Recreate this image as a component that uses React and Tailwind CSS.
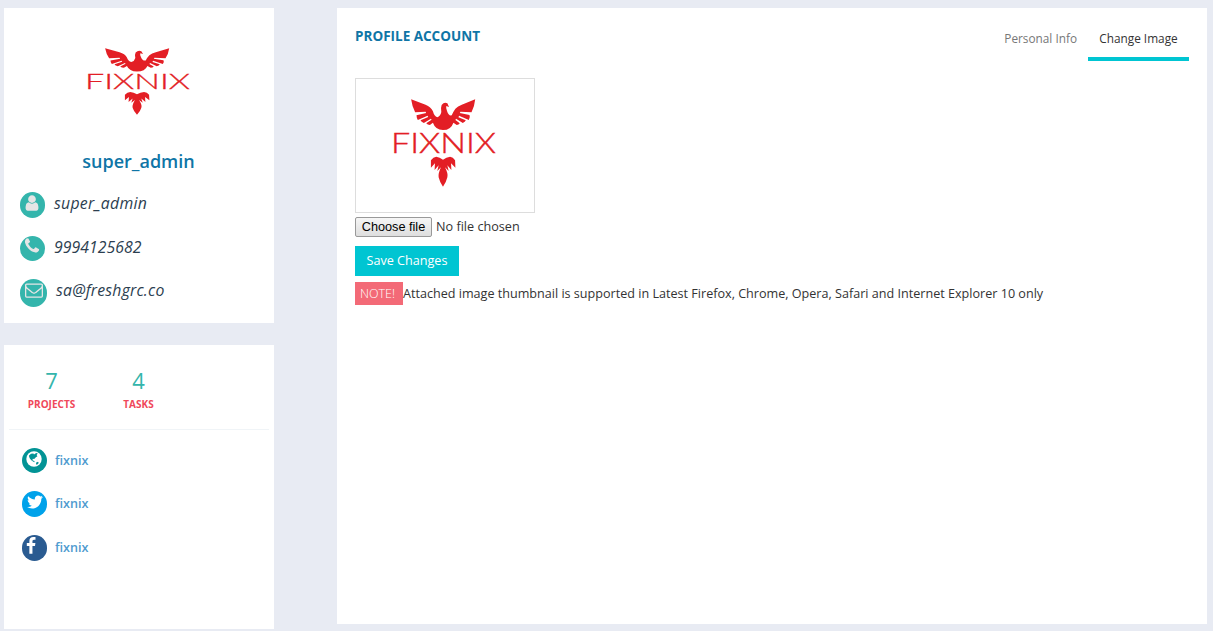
const FA = {
  user: "M1536 1399q0 109-62.5 187t-150.5 78h-854q-88 0-150.5-78t-62.5-187q0-85 8.5-160.5t31.5-152 58.5-131 94-89 134.5-34.5q131 128 313 128t313-128q76 0 134.5 34.5t94 89 58.5 131 31.5 152 8.5 160.5zm-256-887q0 159-112.5 271.5t-271.5 112.5-271.5-112.5-112.5-271.5 112.5-271.5 271.5-112.5 271.5 112.5 112.5 271.5z",
  phone: "M1600 1240q0 27-10 70.5t-21 68.5q-21 50-122 106-94 51-186 51-27 0-52.5-3.5t-57.5-12.5-47.5-14.5-55.5-20.5-49-18q-98-35-175-83-128-79-264.5-215.5t-215.5-264.5q-48-77-83-175-3-9-18-49t-20.5-55.5-14.5-47.5-12.5-57.5-3.5-52.5q0-92 51-186 56-101 106-122 25-11 68.5-21t70.5-10q14 0 21 3 18 6 53 76 11 19 30 54t35 63.5 31 53.5q3 4 17.5 25t21.5 35.5 7 28.5q0 20-28.5 50t-62 55-62 53-28.5 46q0 9 5 22.5t8.5 20.5 14 24 11.5 19q76 137 174 235t235 174q2 1 19 11.5t24 14 20.5 8.5 22.5 5q18 0 46-28.5t53-62 55-62 50-28.5q14 0 28.5 7t35.5 21.5 25 17.5q25 15 53.5 31t63.5 35 54 30q70 35 76 53 3 7 3 21z",
  envelope: "M1664 1504v-768q-32 36-69 66-268 206-426 338-51 43-83 67t-86.5 48.5-102.5 24.5h-2q-48 0-102.5-24.5t-86.5-48.5-83-67q-158-132-426-338-37-30-69-66v768q0 13 9.5 22.5t22.5 9.5h1472q13 0 22.5-9.5t9.5-22.5zm0-1051v-24.5l-.5-13-3-12.5-5.5-9-9-7.5-14-2.5h-1472q-13 0-22.5 9.5t-9.5 22.5q0 168 147 284 193 152 401 317 6 5 35 29.5t46 37.5 44.5 31.5 50.5 27.5 43 9h2q20 0 43-9t50.5-27.5 44.5-31.5 46-37.5 35-29.5q208-165 401-317 54-43 100.5-115.5t46.5-131.5zm128-37v1088q0 66-47 113t-113 47h-1472q-66 0-113-47t-47-113v-1088q0-66 47-113t113-47h1472q66 0 113 47t47 113z",
  twitter: "M1684 408q-67 98-162 167 1 14 1 42 0 130-38 259.5t-115.5 248.5-184.5 210.5-258 146-323 54.5q-271 0-496-145 35 4 78 4 225 0 401-138-105-2-188-64.5t-114-159.5q33 5 61 5 43 0 85-11-112-23-185.5-111.5t-73.5-205.5v-4q68 38 146 41-66-44-105-115t-39-154q0-88 44-163 121 149 294.5 238.5t371.5 99.5q-8-38-8-74 0-134 94.5-228.5t228.5-94.5q140 0 236 102 109-21 205-78-37 115-142 178 93-10 186-50z",
  facebook: "M1343 12v264h-157q-86 0-116 36t-30 108v189h293l-39 296h-254v759h-306v-759h-255v-296h255v-218q0-186 104-288.5t277-102.5q147 0 228 12z",
};

function Icon({ name, className }) {
  return (
    <svg viewBox="0 0 1792 1792" fill="currentColor" className={className}>
      <path d={FA[name]} />
    </svg>
  );
}

function Globe({ className }) {
  return (
    <svg viewBox="0 0 18 18" className={className}>
      <circle cx="9" cy="9" r="7.7" fill="#fff" />
      <path
        d="M4 5.4 6 3.8 8.4 3.6 9 4.6 11.2 3 12.8 3.6 11.6 5 12.4 6.2 10.6 7.6 9.2 9 7.8 8.8 7.4 10.2 9.2 11 9.8 12.2 8.4 11.8 6.6 10.4 5 8.8 4.2 7Z M11.2 12.4 13 11.8 13.8 13 12 14.8 11 14.2Z"
        fill="#029395"
      />
    </svg>
  );
}

function Logo({ className }) {
  return (
    <svg viewBox="145 87 307 264" preserveAspectRatio="none" className={`overflow-visible ${className}`} fill="#e31e25">
      <path d="M199 88 L242 104 Q258 110 264 124 Q268 139 277 142 Q287 138 289 126 Q287 112 290 105 Q298 94 307 100 L312 111 L304 108 Q302 114 306 123 Q311 139 320 136 Q325 124 331 116 Q338 108 350 104 L390 88 Q388 110 379 127 L346 125 L344 129 L373 135 Q376 141 371 150 L342 137 L340 142 L362 151 Q360 156 353 159 L333 146 L331 150 L344 160 Q341 165 335 165 L325 158 Q318 180 294 180 Q271 179 264 158 L255 165 Q248 165 244 160 L260 149 L258 146 L237 159 Q229 156 227 151 L250 141 L248 137 L219 150 Q215 143 215 136 L244 129 L242 125 L211 127 Q202 110 199 88Z" />
      <path d="M258 271 Q265 261 274 260 Q284 261 294 269 Q304 261 315 260 Q324 261 330 271 L331 293 L318 280 L319 300 L307 286 L311 303 L300 292 Q310 311 307 322 Q304 336 294 350 Q284 336 281 322 Q279 311 288 292 L277 303 L281 286 L269 300 L270 280 L258 293Z" />
      <text
        x="139"
        y="249"
        fontFamily="Lato, sans-serif"
        fontWeight="300"
        fontSize="82"
        stroke="#e31e25"
        strokeWidth="1.2"
        textLength="313"
        lengthAdjust="spacingAndGlyphs"
      >
        FIXNIX
      </text>
    </svg>
  );
}

function Contact({ icon, text, badge, iconClass, row, tracking }) {
  return (
    <div className={`flex items-start ${row}`}>
      <span className={`flex shrink-0 justify-center rounded-full bg-[#34b5ac] text-[#e5e5e5] ${badge}`}>
        <Icon name={icon} className={iconClass} />
      </span>
      <span className={`ml-[9px] text-[15.8px] leading-6 text-[#2c3e50] italic ${tracking}`}>{text}</span>
    </div>
  );
}

function Social({ badge, children, row }) {
  return (
    <div className={`flex items-start ${row}`}>
      <span className={`flex w-[25px] shrink-0 rounded-full pl-[3px] text-white ${badge}`}>{children}</span>
      <span className="ml-2 text-[12.6px] leading-[25px] font-semibold text-[#4f9bcf]">fixnix</span>
    </div>
  );
}

export default function App() {
  return (
    <div className="flex h-[631px] w-[1213px] items-start overflow-hidden bg-[#e8ebf3] pt-2 pl-1 font-['Open_Sans',sans-serif] text-[#333]">
      <aside className="flex w-[270px] shrink-0 flex-col gap-[22px]">
        <section className="h-[315px] bg-white pt-10">
          <Logo className="ml-[83px] h-[67px] w-[103px]" />
          <h1 className="mt-[33px] pr-px text-center text-[18px] leading-[26px] font-semibold text-[#0f75a6]">super_admin</h1>
          <div className="pt-[17px] pl-4">
            <Contact icon="user" text="super_admin" row="h-11" tracking="tracking-[0.25px]" badge="h-[26px] w-[25px] mt-[1px]" iconClass="mt-[2px] -ml-[1px] size-[18px]" />
            <Contact icon="phone" text="9994125682" row="h-[43px]" tracking="tracking-[0.05px]" badge="h-[25px] w-[25px] mt-[1px]" iconClass="mt-[1px] -ml-[1px] size-[18px]" />
            <Contact icon="envelope" text="sa@freshgrc.co" row="h-11" tracking="tracking-[0.2px]" badge="h-[28px] w-[27px] mt-[1px]" iconClass="mt-[2px] size-[18px]" />
          </div>
        </section>
        <section className="h-[284px] bg-white px-[5px] pt-[21px]">
          <div className="flex h-16 border-b border-[#f0f4f7] text-center">
            <div className="w-[85px]">
              <div className="text-[22px] leading-7 text-[#34b5ac]">7</div>
              <div className="mt-px text-[10px] leading-[18px] font-bold text-[#f0485a]">PROJECTS</div>
            </div>
            <div className="w-[89px]">
              <div className="text-[22px] leading-7 text-[#34b5ac]">4</div>
              <div className="mt-px text-[10px] leading-[18px] font-bold text-[#f0485a]">TASKS</div>
            </div>
          </div>
          <div className="pt-[18px] pl-[13px]">
            <Social row="h-[43px]" badge="h-[25px] bg-[#029395]">
              <Globe className="mt-[2px] size-[18px]" />
            </Social>
            <Social row="h-11" badge="h-[26px] bg-[#00a2ea]">
              <Icon name="twitter" className="mt-[2px] ml-px size-[18px]" />
            </Social>
            <Social row="h-11" badge="h-[26px] bg-[#2a5b91]">
              <Icon name="facebook" className="mt-[2px] -ml-[3px] size-[18px]" />
            </Social>
          </div>
        </section>
      </aside>

      <main className="ml-[63px] h-[616px] w-[870px] shrink-0 bg-white px-[18px]">
        <header className="flex h-[70px] items-start justify-between">
          <h2 className="pt-[18px] text-[13.5px] leading-5 font-bold text-[#0f75a6]">PROFILE ACCOUNT</h2>
          <nav className="flex text-[11.8px] leading-5">
            <a className="px-[11px] pt-5 text-[#777]">Personal Info</a>
            <a className="h-[53px] w-[101px] border-b-4 border-[#00c5d2] pt-5 text-center text-[#333]">Change Image</a>
          </nav>
        </header>
        <div className="h-[135px] w-[180px] border border-[#ddd] pt-5 pl-[37px]">
          <Logo className="h-[88px] w-[103px]" />
        </div>
        <div className="mt-1 flex h-5 items-start text-[12.65px]">
          <button className="h-5 w-[77px] shrink-0 rounded-[2px] border border-[#999] bg-linear-to-b from-[#f6f6f6] to-[#dedede] font-['Liberation_Sans',sans-serif] text-[12.7px] leading-[17px] text-black">
            Choose file
          </button>
          <span className="ml-1 leading-[18px]">No file chosen</span>
        </div>
        <button className="mt-[9px] block h-[30px] w-[104px] bg-[#00c5d2] pb-[2px] text-[12.6px] leading-[27px] text-white">
          Save Changes
        </button>
        <p className="mt-[6px] flex h-[23px] text-[12.6px] leading-[23px]">
          <span className="w-12 shrink-0 bg-[#f36a77] pl-[5px] text-[12.5px] font-light text-white">NOTE!</span>
          <span className="whitespace-nowrap">
            Attached image thumbnail is supported in Latest Firefox, Chrome, Opera, Safari and Internet Explorer 10 only
          </span>
        </p>
      </main>
    </div>
  );
}
